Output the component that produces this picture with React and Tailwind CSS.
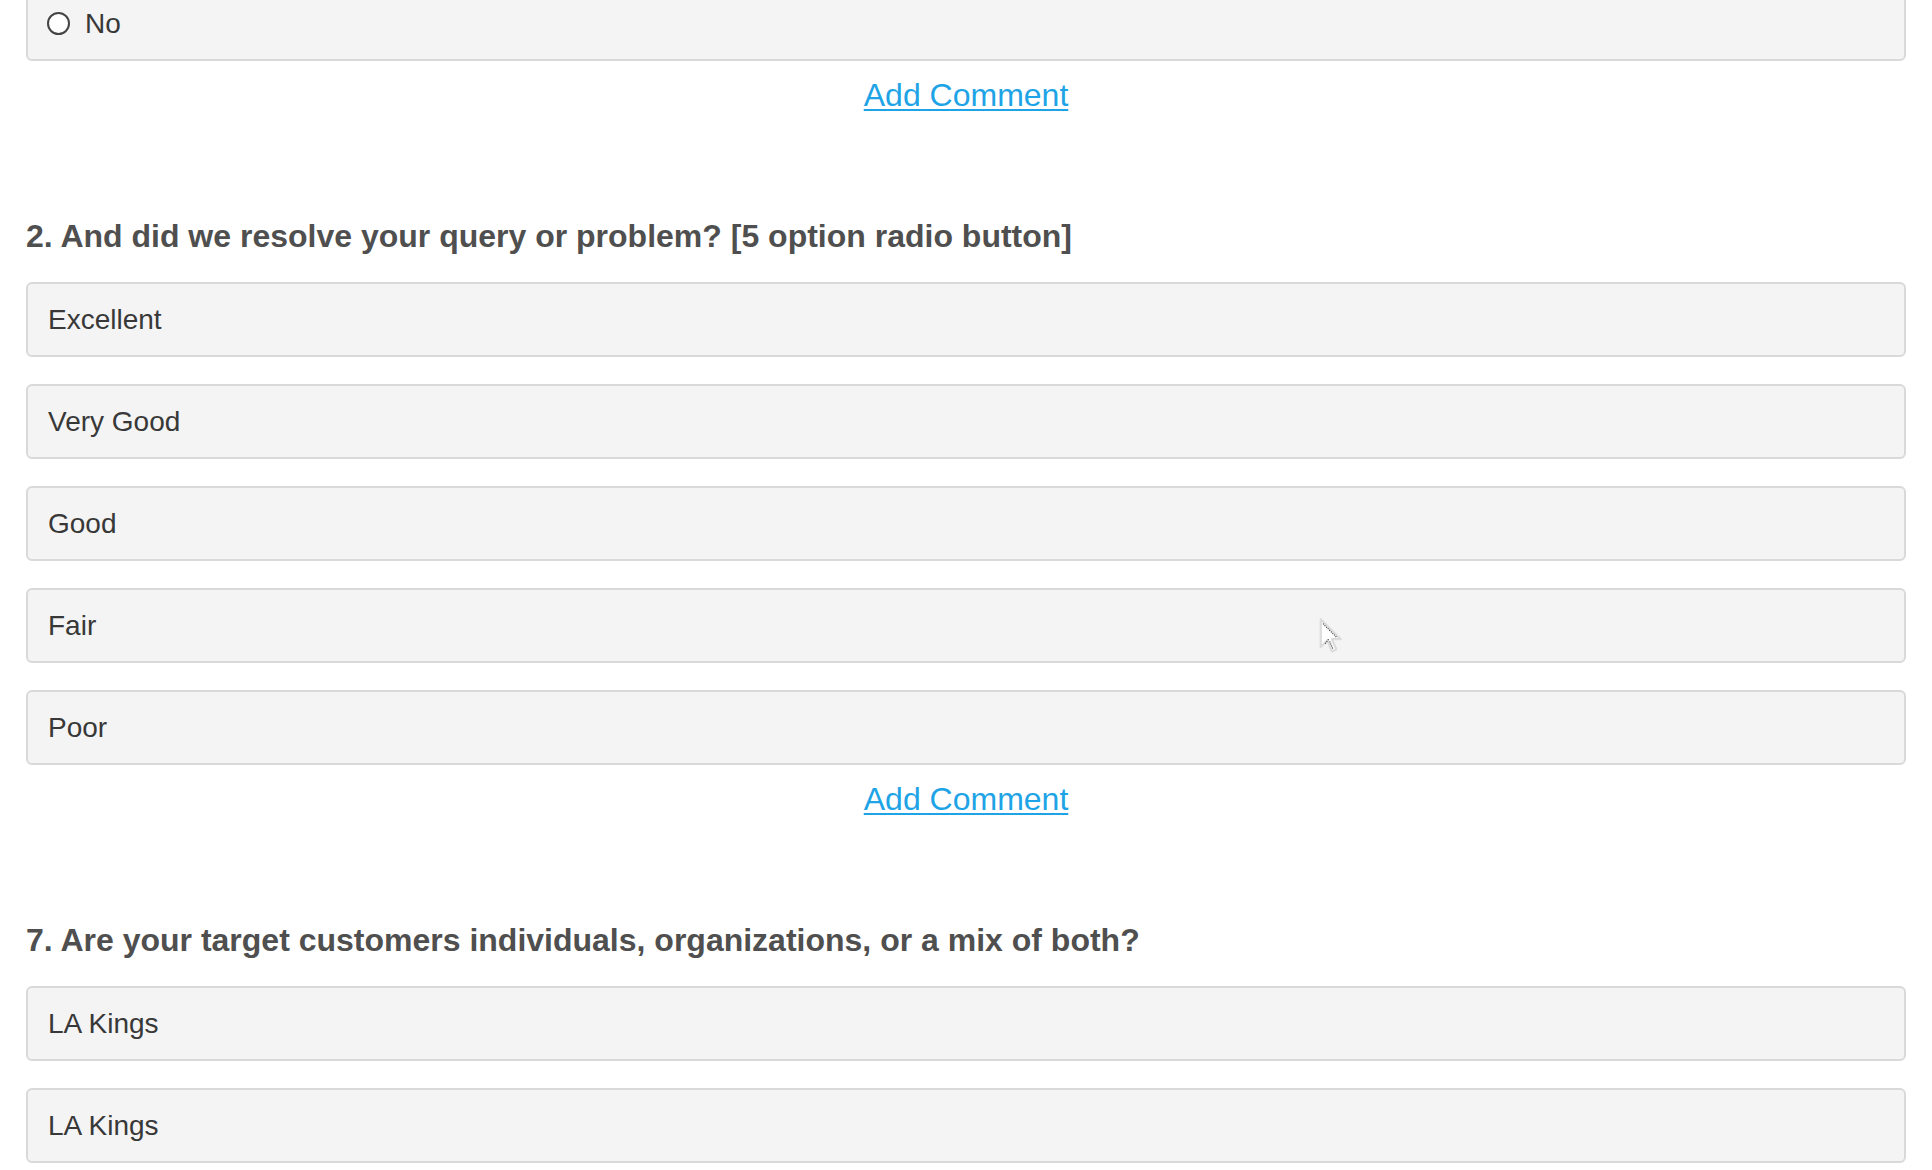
const QUESTIONS = [
  {
    title: "2. And did we resolve your query or problem? [5 option radio button]",
    options: ["Excellent", "Very Good", "Good", "Fair", "Poor"],
    comment: true,
  },
  {
    title: "7. Are your target customers individuals, organizations, or a mix of both?",
    options: ["LA Kings", "LA Kings"],
    comment: false,
  },
];

function OptionBox({ children }) {
  return (
    <div className="h-[75px] rounded-[6px] border-2 border-[#d9d9d9] bg-[#f4f4f4] flex items-center pl-[20px] text-[28px] text-[#383838]">
      {children}
    </div>
  );
}

function AddComment() {
  return (
    <div className="mt-[14px] text-center text-[32px] leading-[40px]">
      <a href="#" className="text-[#1ea4e6] underline underline-offset-[3px] decoration-2">
        Add Comment
      </a>
    </div>
  );
}

function Cursor() {
  return (
    <svg
      className="absolute left-[1318px] top-[617px]"
      width="30"
      height="40"
      viewBox="0 0 26 36"
    >
      <path
        d="M2 2 L2 27 L8 21 L12 31 L16 29 L12 20 L20 20 Z"
        fill="#ffffff"
        stroke="#dcdcdc"
        strokeWidth="2"
        strokeLinejoin="round"
      />
      <path d="M4 6 L16 18" stroke="#333" strokeWidth="1" strokeDasharray="1 1" />
      <path d="M10 22 L13 29" stroke="#333" strokeWidth="1" strokeDasharray="1 1" />
      <path d="M6 24 L9 20" stroke="#333" strokeWidth="1" strokeDasharray="1 1" />
    </svg>
  );
}

export default function App() {
  return (
    <div
      className="relative min-h-screen bg-white overflow-hidden px-[26px]"
      style={{ fontFamily: '"Liberation Sans", Arial, sans-serif' }}
    >
      <div className="-mt-[14px]">
        <div className="h-[75px] rounded-[6px] border-2 border-[#d9d9d9] bg-[#f4f4f4] flex items-center pl-[19px] text-[28px] text-[#383838]">
          <span className="inline-block h-[23px] w-[23px] rounded-full border-2 border-[#444] bg-white" />
          <span className="ml-[15px]">No</span>
        </div>
        <AddComment />
      </div>

      {QUESTIONS.map((q, i) => (
        <div key={i} className="mt-[103px]">
          <h2 className="text-[32px] leading-[36px] font-bold text-[#4f4f4f]">{q.title}</h2>
          <div className="mt-[28px] flex flex-col gap-[27px]">
            {q.options.map((opt, j) => (
              <OptionBox key={j}>{opt}</OptionBox>
            ))}
          </div>
          {q.comment && <AddComment />}
        </div>
      ))}

      <Cursor />
    </div>
  );
}
